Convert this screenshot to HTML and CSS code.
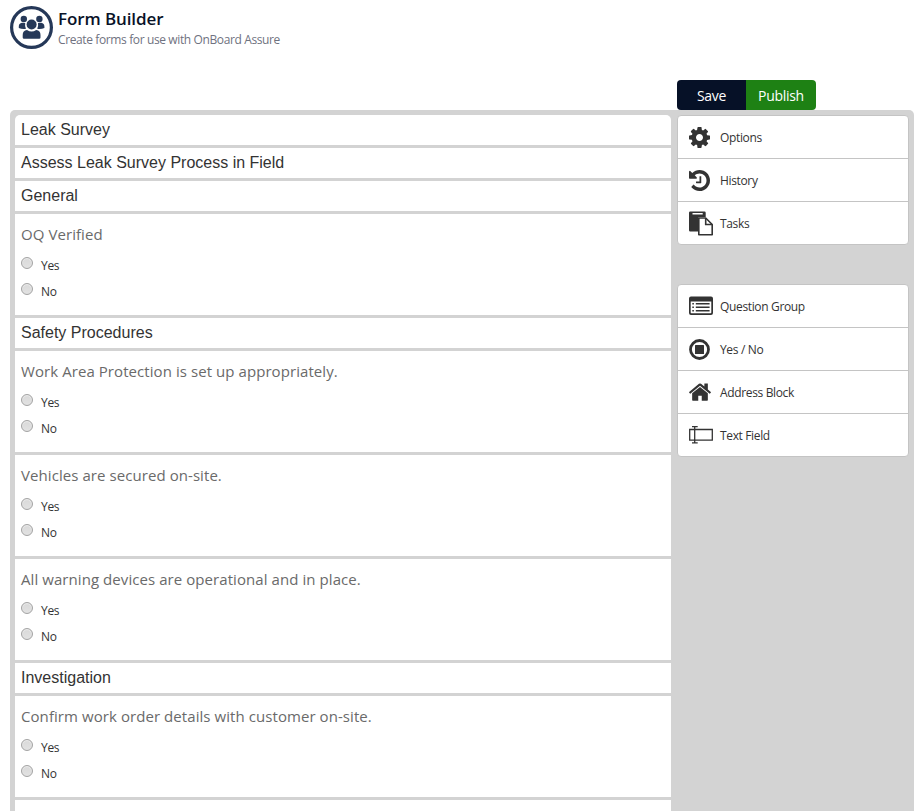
FILE: index.html
```html
<!DOCTYPE html>
<html lang="en">
<head>
<meta charset="utf-8">
<title>Form Builder</title>
<link rel="stylesheet" href="styles.css">
</head>
<body>
<header class="page-header">
  <svg class="logo" viewBox="0 0 43 43" aria-hidden="true">
    <circle cx="21.500" cy="21.500" r="19.900" fill="none" stroke="#253858" stroke-width="3.200"/>
    <g fill="#253858">
      <circle cx="13.800" cy="13" r="3.200"/>
      <circle cx="29.400" cy="13" r="3.200"/>
      <path d="M12 16.700Q8.800 17.300 8.800 20.500V22Q12 23.400 16 22.800Q14.600 19.800 15.200 17Z"/>
      <path d="M31.200 16.700Q34.400 17.300 34.400 20.500V22Q31.200 23.400 27.200 22.800Q28.600 19.800 28 17Z"/>
      <circle cx="21.600" cy="18.500" r="5"/>
      <path d="M17 24Q12.700 24.400 12.700 29V31.500Q12.700 32.700 14 32.700H29.200Q30.500 32.700 30.500 31.500V29Q30.500 24.400 26.200 24Q21.600 27 17 24Z"/>
    </g>
  </svg>
  <div class="heading">
    <h1 class="title">Form Builder</h1>
    <p class="subtitle">Create forms for use with OnBoard Assure</p>
  </div>
</header>

<div class="actions">
  <button class="btn btn-save">Save</button>
  <button class="btn btn-publish">Publish</button>
</div>

<main class="builder">
  <section class="form">
    <h2 class="group">Leak Survey</h2>
    <h2 class="group">Assess Leak Survey Process in Field</h2>
    <h2 class="group">General</h2>
    <div class="question">
      <p class="prompt">OQ Verified</p>
      <label class="choice"><input type="radio" name="q1">Yes</label>
      <label class="choice"><input type="radio" name="q1">No</label>
    </div>
    <h2 class="group">Safety Procedures</h2>
    <div class="question">
      <p class="prompt">Work Area Protection is set up appropriately.</p>
      <label class="choice"><input type="radio" name="q2">Yes</label>
      <label class="choice"><input type="radio" name="q2">No</label>
    </div>
    <div class="question">
      <p class="prompt">Vehicles are secured on-site.</p>
      <label class="choice"><input type="radio" name="q3">Yes</label>
      <label class="choice"><input type="radio" name="q3">No</label>
    </div>
    <div class="question">
      <p class="prompt">All warning devices are operational and in place.</p>
      <label class="choice"><input type="radio" name="q4">Yes</label>
      <label class="choice"><input type="radio" name="q4">No</label>
    </div>
    <h2 class="group">Investigation</h2>
    <div class="question">
      <p class="prompt">Confirm work order details with customer on-site.</p>
      <label class="choice"><input type="radio" name="q5">Yes</label>
      <label class="choice"><input type="radio" name="q5">No</label>
    </div>
    <div class="question"></div>
  </section>

  <aside class="sidebar">
    <ul class="menu">
      <li><span class="icon"><svg width="21" height="21" viewBox="128 128 1536 1536"><path d="M1152 896q0-106-75-181t-181-75-181 75-75 181 75 181 181 75 181-75 75-181zm512-109v222q0 12-8 23t-20 13l-185 28q-19 54-39 91 35 50 107 138 10 12 10 25t-9 23q-27 37-99 108t-94 71q-12 0-26-9l-138-108q-44 23-91 38-16 136-29 186-7 28-36 28h-222q-14 0-24.500-8.500t-11.500-21.500l-28-184q-49-16-90-37l-141 107q-10 9-25 9-14 0-25-11-126-114-165-168-7-10-7-23 0-12 8-23 15-21 51-66.500t54-70.500q-27-50-41-99l-183-27q-13-2-21-12.500t-8-23.500v-222q0-12 8-23t19-13l186-28q14-46 39-92-40-57-107-138-10-12-10-24 0-10 9-23 26-36 98.500-107.500t94.500-71.500q13 0 26 10l138 107q44-23 91-38 16-136 29-186 7-28 36-28h222q14 0 24.500 8.500t11.500 21.500l28 184q49 16 90 37l142-107q9-9 24-9 13 0 25 10 129 119 165 170 7 8 7 22 0 12-8 23-15 21-51 66.500t-54 70.500q26 50 41 98l183 28q13 2 21 12.500t8 23.500z"/></svg></span>Options</li>
      <li><span class="icon"><svg width="21" height="21" viewBox="128 128 1536 1536"><path d="M1664 896q0 156-61 298t-164 245-245 164-298 61q-172 0-327-72.500t-264-204.500q-7-10-6.500-22.500t8.500-20.500l137-138q10-9 25-9 16 2 23 12 73 95 179 147t225 52q104 0 198.500-40.500t163.500-109.500 109.500-163.500 40.500-198.500-40.500-198.500-109.500-163.500-163.500-109.500-198.500-40.500q-98 0-188 35.500t-160 101.500l137 138q31 30 14 69-17 40-59 40h-448q-26 0-45-19t-19-45v-448q0-42 40-59 39-17 69 14l130 129q107-101 244.500-156.500t284.500-55.500q156 0 298 61t245 164 164 245 61 298zm-640-288v448q0 14-9 23t-23 9h-320q-14 0-23-9t-9-23v-64q0-14 9-23t23-9h224v-352q0-14 9-23t23-9h64q14 0 23 9t9 23z"/></svg></span>History</li>
      <li><span class="icon"><svg width="24" height="25" viewBox="0 0 24 25"><path d="M1.200 0.500H15.500Q16.700 0.500 16.700 1.700V6H10.500Q9 6 9 7.500V20.500H1.200Q0 20.500 0 19.300V1.700Q0 .5 1.200 .5Z"/><path fill="#fff" d="M3.500 2H13.700V3.500H3.500Z"/><path fill="#fff" stroke="#333" stroke-width="1.600" stroke-linejoin="round" d="M9.800 7H16.700L23.200 13.500V23.700H9.800Z"/><path fill="none" stroke="#333" stroke-width="1.600" d="M16.700 7V13.500H23.200"/></svg></span>Tasks</li>
    </ul>
    <ul class="menu">
      <li><span class="icon"><svg width="24" height="20" viewBox="0 0 24 20"><path fill-rule="evenodd" d="M2 .5H22Q24 .5 24 2.500V17Q24 19 22 19H2Q0 19 0 17V2.500Q0 .5 2 .5ZM1.700 5.500V16.600Q1.700 17.300 2.400 17.300H21.600Q22.300 17.300 22.300 16.600V5.500Z"/><path d="M3.300 7H4.900V8.400H3.300ZM6.800 7H20.600V8.400H6.800ZM3.300 10.500H4.900V11.900H3.300ZM6.800 10.500H20.600V11.900H6.800ZM3.300 14H4.900V15.400H3.300ZM6.800 14H20.600V15.400H6.800Z"/></svg></span>Question Group</li>
      <li><span class="icon"><svg width="21" height="21" viewBox="0 0 21 21"><circle cx="10.500" cy="10.500" r="9" fill="none" stroke="#333" stroke-width="2.800"/><rect x="6" y="6" width="9" height="9" rx=".6"/></svg></span>Yes / No</li>
      <li><span class="icon"><svg width="22" height="18" viewBox="89 235 1614 1301"><path d="M1472 992v480q0 26-19 45t-45 19h-384v-384h-256v384h-384q-26 0-45-19t-19-45v-480q0-1 .5-3t.5-3l575-474 575 474q1 2 1 6zm223-69l-62 74q-8 9-21 11h-3q-13 0-21-7l-692-577-692 577q-12 8-24 7-13-2-21-11l-62-74q-8-10-7-23.500t11-21.500l719-599q32-26 76-26t76 26l244 204v-195q0-14 9-23t23-9h192q14 0 23 9t9 23v408l219 182q10 8 11 21.500t-7 23.500z"/></svg></span>Address Block</li>
      <li><span class="icon"><svg width="24" height="18" viewBox="0 0 24 18"><path fill="none" stroke="#333" stroke-width="1.300" d="M.7 3.500H23.300V14.100H.7ZM5.700 .7V16.900M3 .7H8.700M3 16.900H8.700"/></svg></span>Text Field</li>
    </ul>
  </aside>
</main>
</body>
</html>
```
FILE: styles.css
```css
* { box-sizing: border-box; }

body {
  margin: 0;
  height: 811px;
  overflow: hidden;
  display: flex;
  flex-direction: column;
  padding: 0 10px;
  background: #fff;
  color: #333;
  font-family: "Open Sans", "Noto Sans", sans-serif;
  font-size: 12px;
}

h1, h2, p, ul { margin: 0; padding: 0; font-weight: 400; }

.page-header {
  display: flex;
  flex: none;
  height: 80px;
  padding-top: 6px;
  gap: 5px;
}
.logo { width: 43px; height: 43px; }
.title {
  color: #091228;
  font-size: 17px;
  font-weight: 600;
  line-height: 25px;
  letter-spacing: -0.1px;
}
.subtitle {
  color: #6f7280;
  font-size: 12px;
  line-height: 17px;
  letter-spacing: -0.38px;
}

.actions {
  display: flex;
  flex: none;
  height: 30px;
  margin-left: 667px;
}
.btn {
  border: 0;
  padding: 2px 0 0;
  color: #fff;
  font: 14px/28px "Open Sans", sans-serif;
  letter-spacing: -0.3px;
}
.btn-save { width: 69px; background: #061127; border-radius: 4px 0 0 4px; }
.btn-publish { width: 70px; background: #1e8114; border-radius: 0 4px 4px 0; }

.builder {
  flex: 1;
  min-height: 0;
  display: flex;
  gap: 6px;
  padding: 5px 5px 0;
  background: #d3d3d3;
  border-radius: 5px 5px 0 0;
  overflow: hidden;
}

.form {
  width: 656px;
  display: flex;
  flex-direction: column;
  gap: 3px;
  border-radius: 5px 5px 0 0;
  overflow: hidden;
}
.group {
  flex: none;
  height: 30px;
  padding-left: 6px;
  background: #fff;
  color: #333;
  font: 16px/29px "Liberation Sans", Arial, sans-serif;
}
.question {
  flex: none;
  height: 101px;
  padding: 8px 6px 0;
  background: #fff;
}
.prompt {
  height: 29px;
  color: #6a6a6a;
  font-size: 15px;
  line-height: 25px;
  letter-spacing: 0.07px;
}
.choice {
  display: flex;
  height: 26px;
  line-height: 29px;
  letter-spacing: -0.3px;
}
.choice input {
  appearance: none;
  flex: none;
  width: 12px;
  height: 12px;
  margin: 6px 8px 0 0;
  border: 1px solid #a3a3a3;
  border-radius: 50%;
  background: linear-gradient(#d9d9d9, #e2e2e2);
  box-shadow: inset 0 1px 1px #eee;
}

.sidebar { width: 232px; }
.menu {
  margin-bottom: 39px;
  border: 1px solid #c4c4c4;
  border-radius: 4px;
  background: #fff;
  list-style: none;
  overflow: hidden;
}
.menu li {
  display: flex;
  align-items: center;
  height: 43px;
  padding-left: 11px;
  border-bottom: 1px solid #c4c4c4;
  letter-spacing: -0.35px;
}
.menu li:last-child { height: 42px; border-bottom: 0; }
.icon { display: flex; width: 31px; }
.icon svg { fill: #333; }
```
